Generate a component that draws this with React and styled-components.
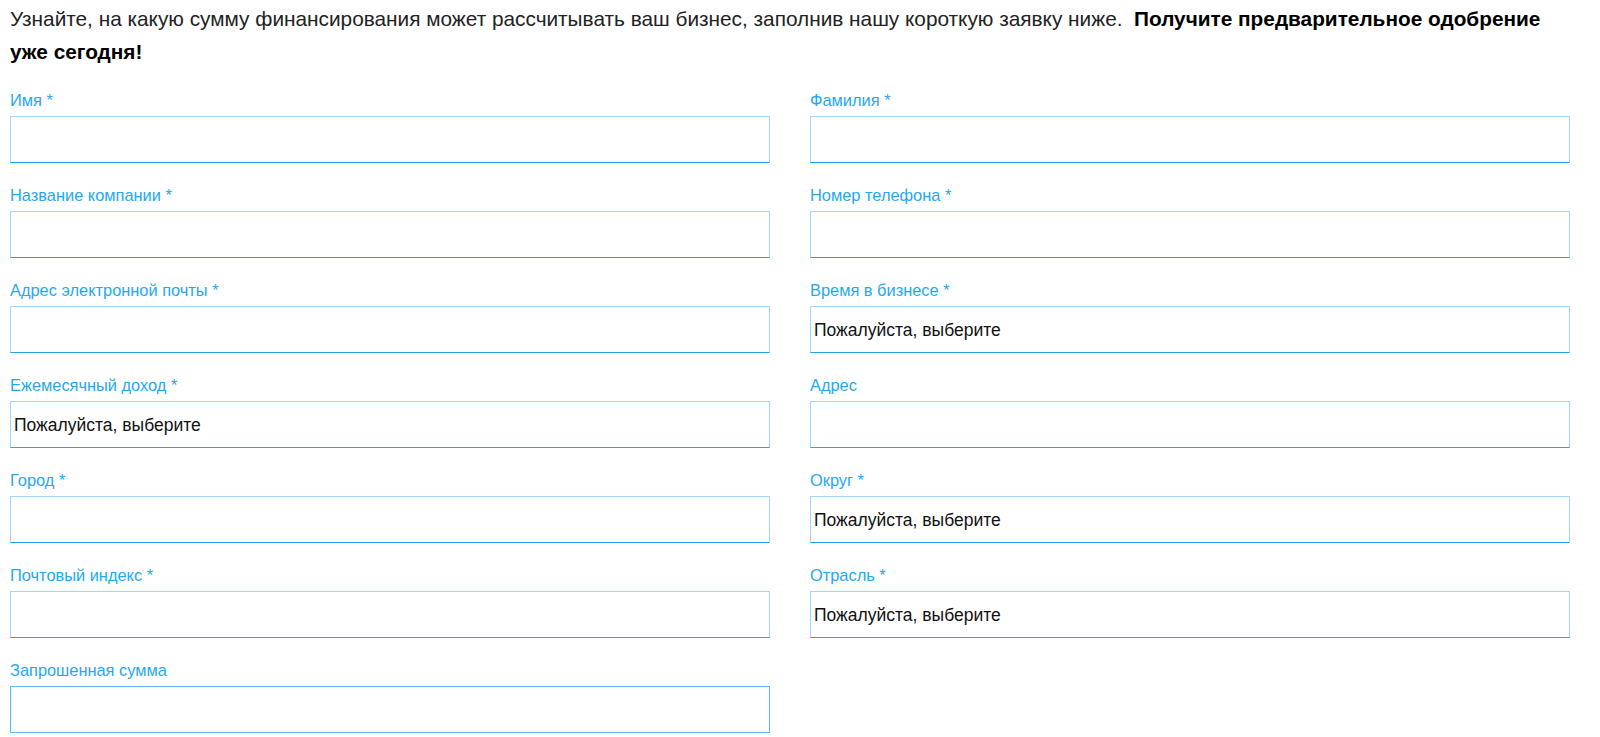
import styled, { createGlobalStyle } from "styled-components";

const GlobalStyle = createGlobalStyle`
  body {
    margin: 0;
    background: #ffffff;
    font-family: "Liberation Sans", Arial, sans-serif;
  }
`;

const Page = styled.div`
  padding: 2px 30px 0 10px;
`;

const Intro = styled.p`
  margin: 0 0 22px 0;
  font-size: 20.8px;
  line-height: 33px;
  color: #222222;

  strong {
    color: #000000;
    font-weight: 700;
  }
`;

const FormGrid = styled.form`
  display: grid;
  grid-template-columns: 760px 760px;
  column-gap: 40px;
  row-gap: 22px;
`;

const Field = styled.div`
  display: flex;
  flex-direction: column;
  gap: 5px;
`;

const Label = styled.label`
  font-size: 16.4px;
  line-height: 21px;
  color: #25a8f2;
`;

const boxStyles = `
  box-sizing: border-box;
  width: 100%;
  height: 47px;
  margin: 0;
  padding: 0 3px;
  background: #ffffff;
  font-family: "Liberation Sans", Arial, sans-serif;
  font-size: 17.5px;
  color: #111111;
  outline: none;
  border-radius: 0;
`;

const TextInput = styled.input`
  ${boxStyles}
  border: 1px solid ${({ $plain }) => ($plain ? "#5db9f7" : "#a3d5fa")};
  border-bottom-color: ${({ $plain }) => ($plain ? "#5db9f7" : "#1fa3ea")};
`;

const Select = styled.select`
  ${boxStyles}
  appearance: none;
  -webkit-appearance: none;
  border: 1px solid #a3d5fa;
  border-bottom-color: #1fa3ea;
`;

const fields = [
  { label: "Имя *" },
  { label: "Фамилия *" },
  { label: "Название компании *" },
  { label: "Номер телефона *" },
  { label: "Адрес электронной почты *" },
  { label: "Время в бизнесе *", select: true },
  { label: "Ежемесячный доход *", select: true },
  { label: "Адрес" },
  { label: "Город *" },
  { label: "Округ *", select: true },
  { label: "Почтовый индекс *" },
  { label: "Отрасль *", select: true },
  { label: "Запрошенная сумма", plain: true },
];

function App() {
  return (
    <>
      <GlobalStyle />
      <Page>
        <Intro>
          Узнайте, на какую сумму финансирования может рассчитывать ваш бизнес, заполнив нашу короткую заявку ниже.&nbsp;{" "}
          <strong>Получите предварительное одобрение уже сегодня!</strong>
        </Intro>
        <FormGrid onSubmit={(e) => e.preventDefault()}>
          {fields.map((f, i) => (
            <Field key={f.label}>
              <Label htmlFor={`f${i}`}>{f.label}</Label>
              {f.select ? (
                <Select id={`f${i}`} defaultValue="">
                  <option value="">Пожалуйста, выберите</option>
                </Select>
              ) : (
                <TextInput id={`f${i}`} type="text" $plain={f.plain} />
              )}
            </Field>
          ))}
        </FormGrid>
      </Page>
    </>
  );
}

export default App;
